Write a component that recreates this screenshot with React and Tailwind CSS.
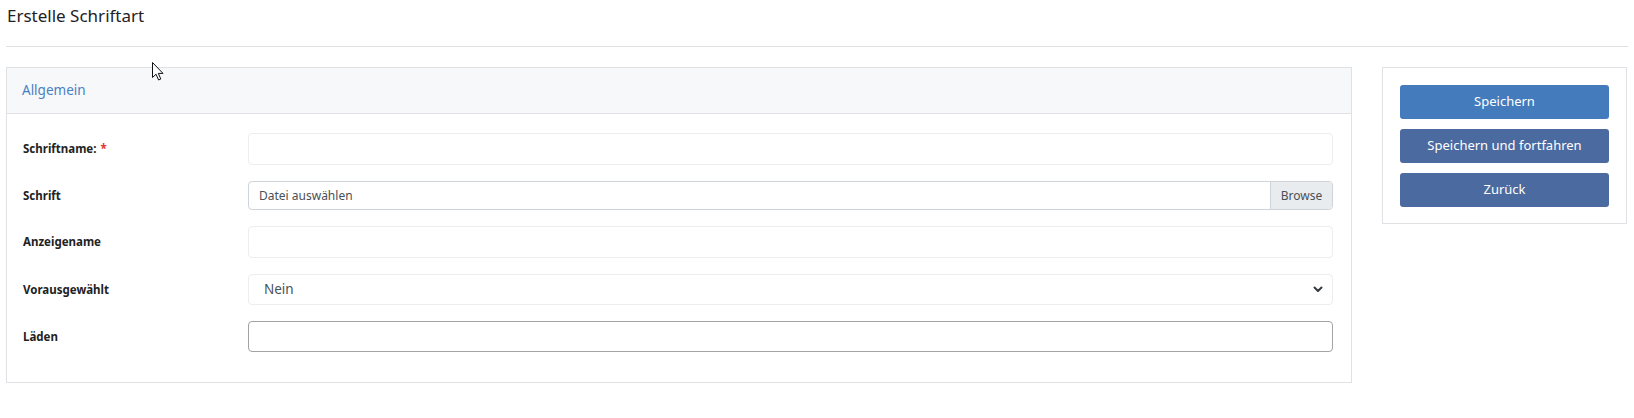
import React from 'react';

const font = { fontFamily: '"Noto Sans", "Open Sans", Arial, sans-serif' };

function Row({ label, required, children }) {
  return (
    <div className="flex items-center">
      <label className="w-[225px] shrink-0 text-[11.5px] font-bold text-[#222]">
        {label}
        {required && <span className="text-[#e3342f] ml-1">*</span>}
      </label>
      <div className="flex-1">{children}</div>
    </div>
  );
}

export default function App() {
  return (
    <div className="relative min-h-[418px] bg-white px-[6px] text-[#212529]" style={font}>
      {/* Titel */}
      <div className="h-[47px] border-b border-[#dee0e4] pt-[3px] pl-[1px]">
        <h1 className="text-[17px] leading-[26px] text-[#1e2125]">Erstelle Schriftart</h1>
      </div>

      <div className="mt-[20px] flex gap-[30px] items-start">
        {/* Hauptkarte */}
        <div className="w-[1346px] h-[316px] border border-[#dfe1e5]">
          <div className="h-[46px] bg-[#f7f8fa] border-b border-[#dfe1e5] flex items-center pl-[15px]">
            <span className="text-[13.5px] text-[#4a7fc1]">Allgemein</span>
          </div>
          <div className="pl-[16px] pr-[18px] pt-[19px] flex flex-col gap-[16px]">
            <Row label="Schriftname:" required>
              <div className="h-[32px] border border-[#ededed] rounded-[4px]" />
            </Row>
            <Row label="Schrift">
              <div className="h-[29px] border border-[#ced4da] rounded-[4px] flex overflow-hidden text-[12px]">
                <div className="flex-1 flex items-center pl-[10px] text-[#495057]">Datei auswählen</div>
                <div className="w-[62px] bg-[#e9ecef] border-l border-[#ced4da] flex items-center justify-center text-[#495057]">Browse</div>
              </div>
            </Row>
            <Row label="Anzeigename">
              <div className="h-[32px] border border-[#ededed] rounded-[4px]" />
            </Row>
            <Row label="Vorausgewählt">
              <div className="h-[31px] border border-[#ededed] rounded-[4px] flex items-center justify-between pl-[15px] pr-[9px] text-[13.5px] text-[#495057]">
                <span>Nein</span>
                <svg width="10" height="7" viewBox="0 0 10 7" fill="none">
                  <path d="M1.5 1.5L5 5L8.5 1.5" stroke="#343a40" strokeWidth="2" strokeLinecap="round" strokeLinejoin="round" />
                </svg>
              </div>
            </Row>
            <Row label="Läden">
              <div className="h-[31px] border border-[#a3a3a3] rounded-[4px]" />
            </Row>
          </div>
        </div>

        {/* Aktionen */}
        <div className="w-[245px] h-[157px] border border-[#dfe1e5] px-[17px] pt-[17px] flex flex-col gap-[10px]">
          <button className="h-[34px] rounded-[3px] bg-[#437bbd] text-white text-[13px]">Speichern</button>
          <button className="h-[34px] rounded-[3px] bg-[#4b6a9f] text-white text-[13px]">Speichern und fortfahren</button>
          <button className="h-[34px] rounded-[3px] bg-[#4b6a9f] text-white text-[13px]">Zurück</button>
        </div>
      </div>

      {/* Mauszeiger */}
      <svg className="absolute left-[152px] top-[62px]" width="12" height="19" viewBox="0 0 12 19">
        <path d="M0.5 0.5V15.5L4 12.2L6.6 18L8.8 17L6.3 11.4H11L0.5 0.5Z" fill="white" stroke="#111" strokeWidth="1" strokeLinejoin="round" />
      </svg>
    </div>
  );
}
